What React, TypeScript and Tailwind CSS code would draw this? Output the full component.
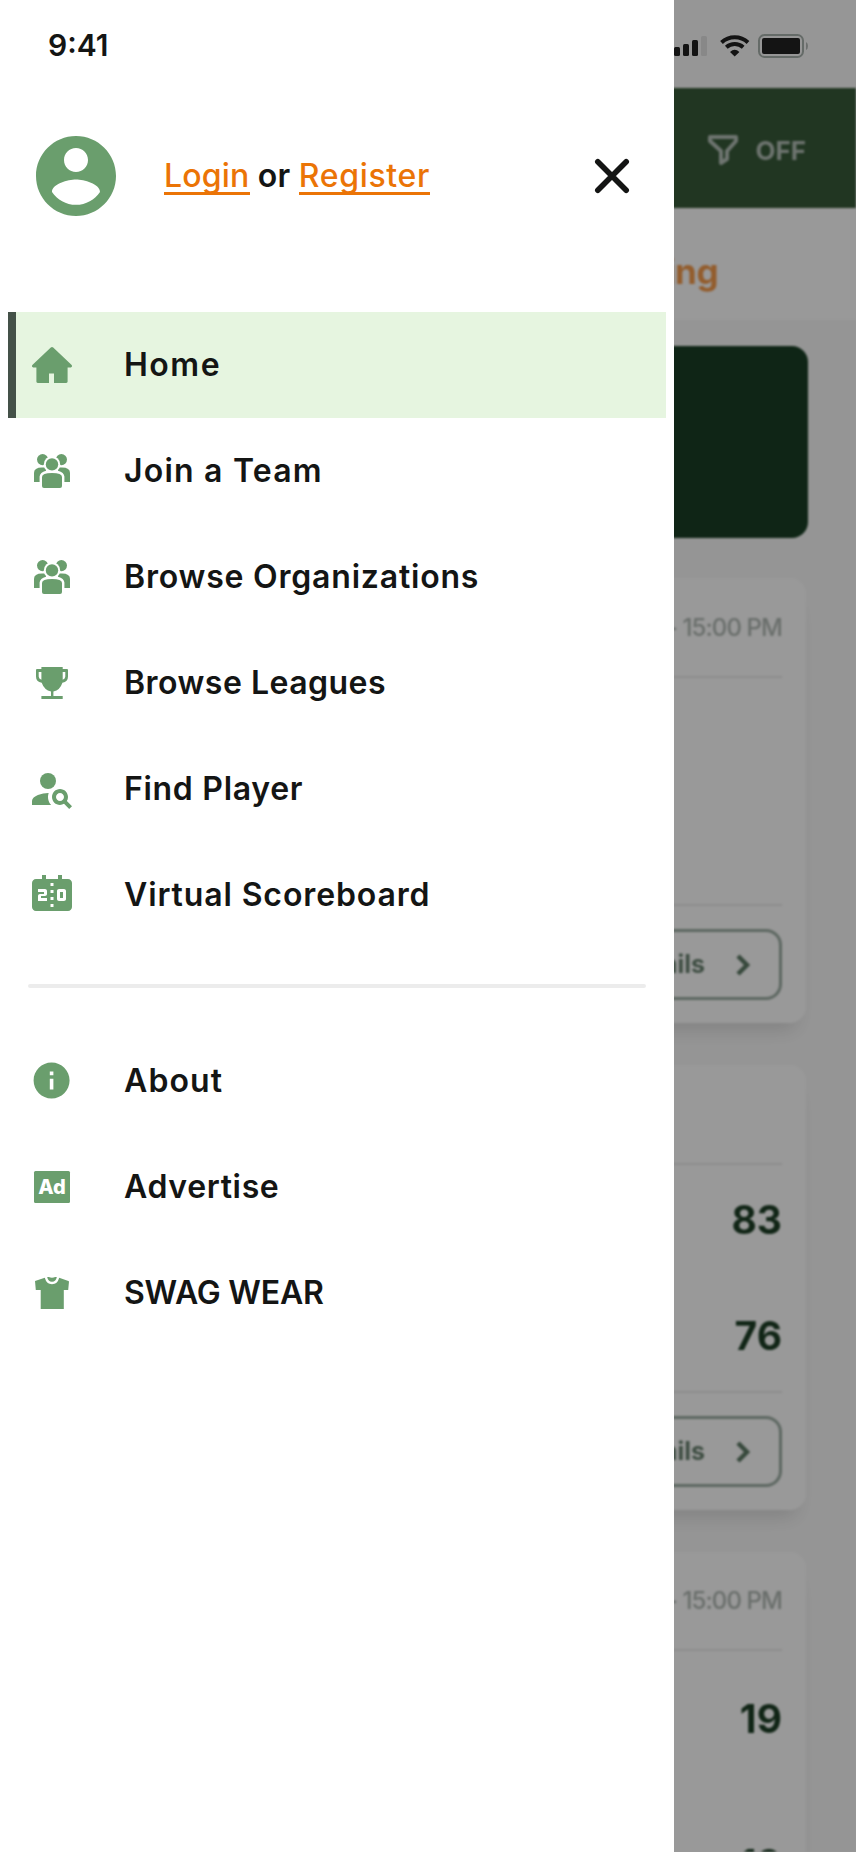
import type { ReactNode } from "react";
import { MdInfo, MdPersonSearch, MdScoreboard } from "react-icons/md";

const HomeIcon = () => (
  <svg width="48" height="48" viewBox="0 0 48 48" fill="currentColor">
    <path d="M22.8 6.5a1.8 1.8 0 0 1 2.4 0L43.4 23.8c1.1 1.1.7 2.6-.6 2.6H39.6V40.6c0 .9-.5 1.4-1.4 1.4H26V32.4H21V42H9.8c-.9 0-1.4-.5-1.4-1.4V26.4H5.2c-1.3 0-1.7-1.5-.6-2.6z" />
  </svg>
);

const TeamIcon = () => (
  <svg width="48" height="48" viewBox="0 0 48 48" fill="currentColor">
    <circle cx="14.6" cy="12.6" r="5.6" />
    <circle cx="33.4" cy="12.6" r="5.6" />
    <path d="M6 35V26q0-5.500 8-5.500h20q8 0 8 5.500v9z" />
    <circle cx="24" cy="17.400" r="8.200" fill="#fff" />
    <path d="M11.600 35.500V29.500q.3-4 6.400-5.800V19h12v4.700q6.100 1.800 6.400 5.800v6z" fill="#fff" />
    <circle cx="24" cy="17.400" r="6.200" />
    <path d="M14 39V30q0-4 10-4t10 4V39q0 2-2 2H16q-2 0-2-2z" />
  </svg>
);

const TrophyIcon = () => (
  <svg width="48" height="48" viewBox="0 0 48 48" fill="currentColor">
    <path d="M13.400 8h21.300v2H39q1 0 1 1v6.500q0 5.500-5.600 6.200-2.300 7.400-9 8.700V37h9.300v3H13.400v-3H23v-4.600q-6.700-1.300-9.300-8.700Q8 23 8 17.500V11q0-1 1-1h4.400zM10.700 13v4.500q0 2.300 2.700 3.200V13zm24 0v7.700q2.600-.9 2.600-3.200V13z" />
  </svg>
);

const AdIcon = () => (
  <svg width="48" height="48" viewBox="0 0 48 48">
    <rect x="6" y="8" width="36" height="32" rx="1.500" fill="currentColor" />
    <text x="24" y="31" textAnchor="middle" fontSize="20" fontWeight="800" fontFamily="Inter, sans-serif" fill="#fff">Ad</text>
  </svg>
);

const ShirtIcon = () => (
  <svg width="48" height="48" viewBox="0 0 48 48" fill="currentColor">
    <path d="M16.800 8.700Q18.500 15.200 24 15.200T31.200 8.700L40.400 12 41 12.500 40.200 21H35.800V40H12.700V21H7.800L7 12z" />
    <path d="M19.200 8h1.600q3.200 1.400 6.400 0h1.600Q28 12.800 24 12.800T19.200 8z" />
  </svg>
);

type Item = { label: string; icon: ReactNode; tracking: string };

const mainItems: Item[] = [
  { label: "Home", icon: <HomeIcon />, tracking: "tracking-[1.5px]" },
  { label: "Join a Team", icon: <TeamIcon />, tracking: "tracking-[1.2px]" },
  { label: "Browse Organizations", icon: <TeamIcon />, tracking: "tracking-[0.8px]" },
  { label: "Browse Leagues", icon: <TrophyIcon />, tracking: "tracking-[0.48px]" },
  { label: "Find Player", icon: <MdPersonSearch size={48} />, tracking: "tracking-[0.7px]" },
  { label: "Virtual Scoreboard", icon: <MdScoreboard size={48} />, tracking: "tracking-[0.88px]" },
];

const moreItems: Item[] = [
  { label: "About", icon: <MdInfo size={43.2} />, tracking: "tracking-[1.1px]" },
  { label: "Advertise", icon: <AdIcon />, tracking: "tracking-[0.65px]" },
  { label: "SWAG WEAR", icon: <ShirtIcon />, tracking: "tracking-[-0.2px]" },
];

function MenuItem({ item, active }: { item: Item; active?: boolean }) {
  return (
    <li
      className={`flex h-[106px] items-center border-l-8 pl-3 ${
        active ? "border-[#445148] bg-[#e6f5e0]" : "border-transparent"
      }`}
    >
      <span className="flex w-12 justify-center text-[#6a9e6d]">{item.icon}</span>
      <span className={`ml-12 whitespace-nowrap text-[32px] leading-none font-semibold text-[#141514] ${item.tracking}`}>
        {item.label}
      </span>
    </li>
  );
}

function Drawer() {
  return (
    <aside className="absolute inset-y-0 left-0 w-[674px] bg-white">
      <div className="flex h-[88px] items-center pt-0.5 pl-[48px] text-[30px] leading-none font-semibold text-[#141514]">
        9:41
      </div>

      <div className="flex h-[176px] items-center pl-7">
        <svg width="96" height="96" viewBox="0 0 24 24" fill="#6a9e6d">
          <path d="M12 2C6.480 2 2 6.480 2 12s4.480 10 10 10 10-4.480 10-10S17.520 2 12 2zm0 3c1.660 0 3 1.340 3 3s-1.340 3-3 3-3-1.340-3-3 1.340-3 3-3zm0 14.200c-2.500 0-4.710-1.280-6-3.220.03-1.990 4-3.080 6-3.080 1.990 0 5.970 1.090 6 3.080-1.290 1.940-3.500 3.220-6 3.220z" />
        </svg>
        <p className="ml-10 flex w-[266px] justify-between pt-[3px] text-[32px] leading-[32px] font-semibold text-[#141514]">
          <a className="border-b-[3px] border-[#eb7406] font-medium tracking-[0.2px] text-[#eb7406]">Login</a>
          <span className="tracking-[0.4px]">or</span>
          <a className="border-b-[3px] border-[#eb7406] font-medium tracking-[0.65px] text-[#eb7406]">Register</a>
        </p>
        <svg className="ml-[158px]" width="48" height="48" viewBox="0 0 48 48" fill="none" stroke="#141514" strokeWidth="5.600" strokeLinecap="round">
          <path d="M9.800 9.800l28.400 28.400M38.200 9.800L9.800 38.200" />
        </svg>
      </div>

      <nav className="px-2 pt-12">
        <ul>
          {mainItems.map((item, i) => (
            <MenuItem key={item.label} item={item} active={i === 0} />
          ))}
        </ul>
        <div className="mx-5 mt-9 mb-10 h-1 rounded-full bg-[#ececec]" />
        <ul>
          {moreItems.map((item) => (
            <MenuItem key={item.label} item={item} />
          ))}
        </ul>
      </nav>
    </aside>
  );
}

function StatusBar() {
  return (
    <div className="flex h-[88px] justify-end bg-[#fbfbfb] pt-8 pr-[46px]">
      <svg width="136" height="28" viewBox="0 0 136 28" fill="#222">
        <rect x="0" y="15" width="6" height="9" rx="1.500" />
        <rect x="9" y="12" width="6" height="12" rx="1.500" />
        <rect x="18" y="8" width="6" height="16" rx="1.500" />
        <rect x="27" y="4" width="6" height="20" rx="1.500" fill="#e3e3e3" />
        <g fill="none" stroke="#222" strokeWidth="4">
          <path d="M47.500 10.500a19.600 19.600 0 0 1 26.500 0" />
          <path d="M52.300 15.300a12.600 12.600 0 0 1 16.900 0" />
        </g>
        <path d="M56 20q4.700-4.400 9.400 0l-4.700 4.500z" />
        <rect x="85" y="3" width="44" height="22" rx="5.500" fill="none" stroke="#a9b3ad" strokeWidth="2" />
        <rect x="88" y="6" width="38" height="16" rx="2" />
        <path d="M132 10q2 1 2 4t-2 4z" fill="#b5bab7" />
      </svg>
    </div>
  );
}

function MatchCard({ time, scores, tall }: { time?: string; scores?: string[]; tall?: boolean }) {
  return (
    <section className="flex h-[445px] w-[757px] shrink-0 flex-col rounded-2xl bg-white px-6 shadow-[0_16px_20px_-10px_rgba(0,0,0,0.14)]">
      <div className={`flex items-center justify-end text-[24px] font-medium tracking-[-0.9px] text-[#b0b8b3] ${tall ? "h-[97px]" : "h-[98px] pt-px"}`}>
        {time}
      </div>
      <div className="h-0.5 shrink-0 bg-[#ebebeb]" />
      <div className="flex h-[226px] shrink-0 flex-col items-end text-[39px] font-bold text-[#1d3f26]">
        {scores?.map((s, i) => (
          <div key={i} className={tall ? "flex h-[136px] shrink-0 items-center last:h-[154px]" : "flex h-[116px] shrink-0 items-center pb-1.5"}>
            {s}
          </div>
        ))}
      </div>
      {!tall && (
        <>
          <div className="h-0.5 shrink-0 bg-[#ebebeb]" />
          <div className="mt-[23px] flex h-[71px] shrink-0 items-center justify-end rounded-2xl border-[3px] border-[#9cada3] pr-[25px] text-[25px] font-bold text-[#6a8371]">
            ails
            <svg className="ml-[25px]" width="24" height="28" viewBox="0 0 24 28" fill="none" stroke="#5d7a65" strokeWidth="4.500">
              <path d="M8 5l9 9-9 9" />
            </svg>
          </div>
        </>
      )}
    </section>
  );
}

function ScoresPage() {
  return (
    <div className="flex h-[1764px] flex-col overflow-hidden bg-[#f9f9f9] blur-[1px]">
      <header className="flex h-[120px] shrink-0 items-center justify-end bg-[#375a39] pt-1 pr-[50px] text-[26px] font-bold text-[#b7c2ba]">
        <svg width="32" height="32" viewBox="0 0 32 32" fill="none" stroke="currentColor" strokeWidth="4" strokeLinejoin="round">
          <path d="M3 3h26v4l-9 10v8l-6 4V17L3 7z" />
        </svg>
        <span className="ml-4">OFF</span>
      </header>
      <div className="flex h-[112px] shrink-0 items-center justify-end bg-white pt-3.5 pr-[138px] text-[35px] font-bold tracking-[-0.5px] text-[#f59b4c]">
        ing
      </div>
      <div className="flex flex-col items-end pt-[26px] pr-[50px]">
        <div className="mr-[-2px] h-[192px] w-[760px] shrink-0 rounded-2xl bg-[#193f25]" />
        <div className="flex flex-col gap-[42px] pt-10">
          <MatchCard time="- 15:00 PM" />
          <MatchCard scores={["83", "76"]} />
          <MatchCard time="- 15:00 PM" scores={["19", "19"]} tall />
        </div>
      </div>
    </div>
  );
}

export default function App() {
  return (
    <div className="relative h-[1852px] w-[856px] overflow-hidden bg-white font-['Inter',sans-serif]">
      <StatusBar />
      <ScoresPage />
      <div className="absolute inset-0 bg-black/40" />
      <Drawer />
    </div>
  );
}
